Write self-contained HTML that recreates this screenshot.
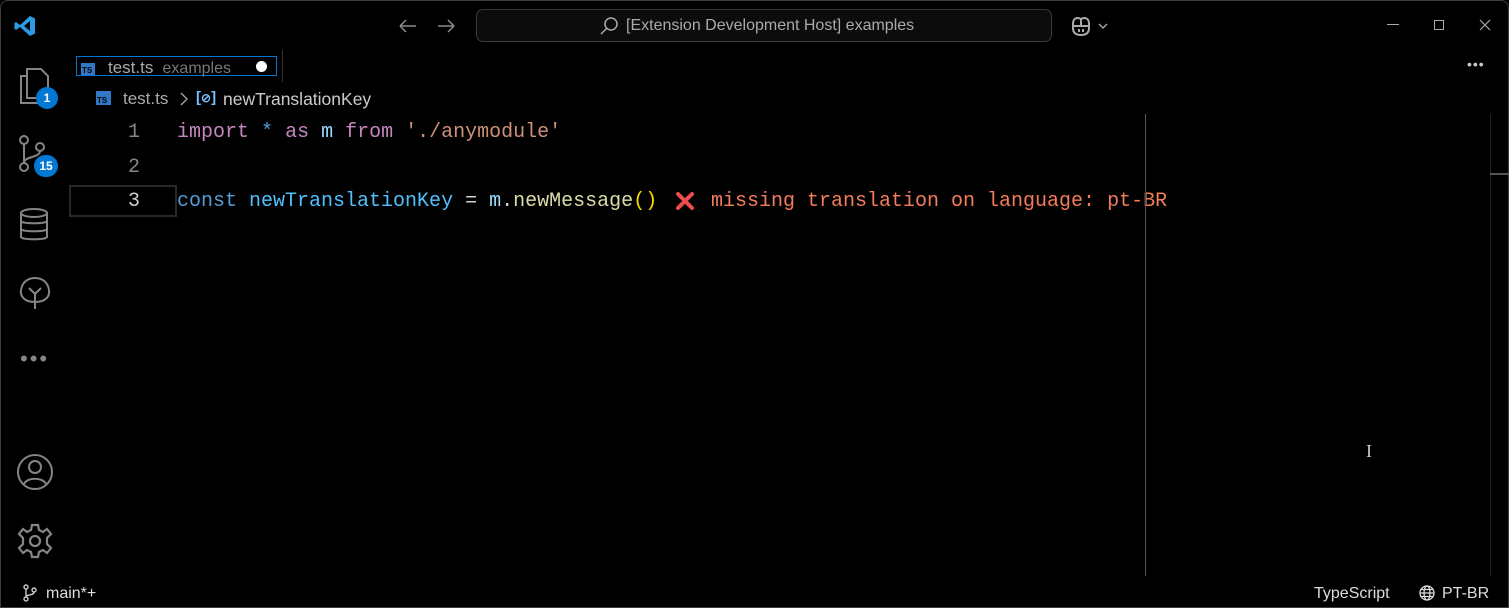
<!DOCTYPE html>
<html><head><meta charset="utf-8"><style>
*{margin:0;padding:0;box-sizing:border-box}
body{width:1509px;height:608px;background:#000;overflow:hidden;position:relative;font-family:"Liberation Sans",sans-serif;color:#ccc}
.frame{position:absolute;inset:0;border:1px solid #3c3c3c;border-radius:8px 8px 0 0}
.a{position:absolute}
.code{font-family:"Liberation Mono",monospace;font-size:20px;white-space:pre;position:absolute;line-height:24px}
.ln{font-family:"Liberation Mono",monospace;font-size:20px;position:absolute;color:#858585;width:40px;text-align:right}
</style></head><body>
<div class="frame"></div>
<svg class="a" style="left:13px;top:14px" width="24" height="24" viewBox="0 0 24 24"><path d="M17 2 L22 4.5 V19.5 L17 22 L7 13 L3 16 L1.5 15 V9 L3 8 L7 11 Z M17 7 L11 12 L17 17 Z" fill="#2a9ce6"/></svg>
<svg class="a" style="left:398px;top:16px" width="60" height="20" viewBox="0 0 60 20" stroke="#8a8a8a" stroke-width="1.5" fill="none"><path d="M2 10H18M2 10l6-6M2 10l6 6"/><path d="M40 10H56M56 10l-6-6M56 10l-6 6"/></svg>
<div class="a" style="left:476px;top:9px;width:576px;height:33px;border:1px solid #3a3a3a;border-radius:7px;background:#0c0c0c"></div>
<svg class="a" style="left:598px;top:15px" width="22" height="22" viewBox="0 0 22 22" stroke="#aaa" stroke-width="1.5" fill="none"><circle cx="13" cy="9" r="6"/><path d="M8.5 13.5L3 19"/></svg>
<div class="a" style="left:626px;top:17px;font-size:16px;color:#aaa">[Extension Development Host] examples</div>
<svg class="a" style="left:1069px;top:14px" width="44" height="24" viewBox="0 0 44 24" stroke="#aaa" stroke-width="2" fill="none"><path d="M4 10C4 4 8 3 12 5C16 3 20 4 20 10V14C20 19 17 21 12 21C7 21 4 19 4 14Z"/><path d="M4 12H20M10 15v3M14 15v3M12 5v7"/><path d="M30 10l4 4 4-4" stroke-width="1.3"/></svg>
<div class="a" style="left:1387px;top:24px;width:12px;height:1px;background:#aaa"></div>
<div class="a" style="left:1434px;top:20px;width:10px;height:10px;border:1px solid #aaa"></div>
<svg class="a" style="left:1479px;top:19px" width="12" height="12" stroke="#aaa" stroke-width="1.2"><path d="M1 1L11 11M11 1L1 11"/></svg>
<svg class="a" style="left:17px;top:66px" width="36" height="40" viewBox="0 0 36 40" stroke="#858585" stroke-width="2" fill="none"><path d="M10 10H4V37H22V32"/><path d="M10 3H24L31 10V32H10Z"/></svg>
<div class="a" style="left:36px;top:87px;width:22px;height:22px;border-radius:50%;background:#0078d4;color:#fff;font-size:12px;font-weight:bold;text-align:center;line-height:22px">1</div>
<svg class="a" style="left:18px;top:134px" width="30" height="40" viewBox="0 0 30 40" stroke="#858585" stroke-width="2" fill="none"><circle cx="6" cy="6" r="4"/><circle cx="22" cy="13" r="4"/><circle cx="6" cy="33" r="4"/><path d="M6 10V29M22 17C22 24 6 22 6 29"/></svg>
<div class="a" style="left:34px;top:155px;width:24px;height:22px;border-radius:11px;background:#0078d4;color:#fff;font-size:12px;font-weight:bold;text-align:center;line-height:22px">15</div>
<svg class="a" style="left:18px;top:207px" width="32" height="36" viewBox="0 0 32 36" stroke="#858585" stroke-width="2" fill="none"><ellipse cx="16" cy="6" rx="13" ry="4"/><path d="M3 6V30C3 33 29 33 29 30V6M3 14C3 17 29 17 29 14M3 22C3 25 29 25 29 22"/></svg>
<svg class="a" style="left:18px;top:274px" width="34" height="38" viewBox="0 0 34 38" stroke="#858585" stroke-width="2" fill="none"><path d="M17 35V18M11 14l6 6 6-6M17 28C6 28 2 22 3 16C4 9 9 4 17 4C25 4 30 9 31 16C32 22 28 28 17 28"/></svg>
<div class="a" style="left:20px;top:346px;font-size:22px;color:#858585;letter-spacing:2px">•••</div>
<svg class="a" style="left:16px;top:453px" width="38" height="38" viewBox="0 0 38 38" stroke="#858585" stroke-width="2" fill="none"><circle cx="19" cy="19" r="17"/><circle cx="19" cy="14" r="6"/><path d="M8 31C11 24 27 24 30 31"/></svg>
<svg class="a" style="left:16px;top:522px" width="38" height="38" viewBox="0 0 38 38" stroke="#858585" stroke-width="2.2" fill="none"><circle cx="19" cy="19" r="5"/><path d="M16 3H22L23 8L27 10L31 7L35 12L31 16V22L35 26L31 31L27 28L23 30L22 35H16L15 30L11 28L7 31L3 26L7 22V16L3 12L7 7L11 10L15 8Z"/></svg>
<div class="a" style="left:76px;top:56px;width:201px;height:20px;border:1px solid #0078d4"></div>
<div class="a" style="left:282px;top:50px;width:1px;height:32px;background:#333"></div>
<div class="a" style="left:81px;top:63px;width:14px;height:12px;background:#3178c6;color:#000;font-size:8px;font-weight:bold;line-height:16px;padding-left:1px">TS</div>
<div class="a" style="left:108px;top:58px;font-size:17px;color:#aaa">test.ts <span style="font-size:16px;color:#777">&nbsp;examples</span></div>
<div class="a" style="left:256px;top:61px;width:11px;height:11px;border-radius:50%;background:#fff"></div>
<div class="a" style="left:1467px;top:56px;font-size:14px;color:#ccc;letter-spacing:1px">•••</div>
<div class="a" style="left:96px;top:91px;width:15px;height:14px;background:#3178c6;color:#000;font-size:8px;font-weight:bold;line-height:19px;padding-left:1px">TS</div>
<div class="a" style="left:123px;top:89px;font-size:17px;color:#aaa">test.ts</div>
<svg class="a" style="left:178px;top:92px" width="12" height="14" stroke="#aaa" stroke-width="1.3" fill="none"><path d="M3 1L9 7L3 13"/></svg>
<div class="a" style="left:196px;top:89px;font-size:15px;color:#75beff;font-weight:bold">[<span style="font-size:12px">⊘</span>]</div>
<div class="a" style="left:223px;top:89px;font-size:17.5px;color:#ccc">newTranslationKey</div>
<div class="a" style="left:69px;top:185px;width:108px;height:32px;border:2px solid #282828"></div>
<div class="ln" style="left:100px;top:121px">1</div>
<div class="ln" style="left:100px;top:156px">2</div>
<div class="ln" style="left:100px;top:190px;color:#ccc">3</div>
<div class="code" style="left:177px;top:121px"><span style="color:#c586c0">import</span> <span style="color:#569cd6">*</span> <span style="color:#c586c0">as</span> <span style="color:#9cdcfe">m</span> <span style="color:#c586c0">from</span> <span style="color:#ce9178">'./anymodule'</span></div>
<div class="code" style="left:177px;top:190px"><span style="color:#569cd6">const</span> <span style="color:#4fc1ff">newTranslationKey</span> <span style="color:#d4d4d4">=</span> <span style="color:#9cdcfe">m</span><span style="color:#d4d4d4">.</span><span style="color:#dcdcaa">newMessage</span><span style="color:#ffd700">()</span></div>
<svg class="a" style="left:675px;top:191px" width="20" height="20" stroke="#f14c4c" stroke-width="4" stroke-linecap="round"><path d="M3 3L17 17M17 3L3 17"/></svg>
<div class="code" style="left:711px;top:190px;color:#f47c5a">missing translation on language: pt-BR</div>
<div class="a" style="left:1145px;top:114px;width:1px;height:462px;background:#555"></div>
<div class="a" style="left:1490px;top:114px;width:1px;height:462px;background:#222"></div>
<div class="a" style="left:1490px;top:173px;width:19px;height:2px;background:#555"></div>
<div class="a" style="left:1366px;top:441px;font-size:18px;color:#ccc;font-family:'Liberation Serif',serif">I</div>
<svg class="a" style="left:22px;top:584px" width="16" height="18" viewBox="0 0 16 18" stroke="#ccc" stroke-width="1.4" fill="none"><circle cx="4" cy="3" r="2"/><circle cx="12" cy="6" r="2"/><circle cx="4" cy="15" r="2"/><path d="M4 5V13M12 8C12 12 4 10 4 13"/></svg>
<div class="a" style="left:46px;top:585px;font-size:16px;color:#ddd">main*+</div>
<div class="a" style="left:1314px;top:585px;font-size:16px;color:#ddd">TypeScript</div>
<svg class="a" style="left:1419px;top:585px" width="16" height="16" viewBox="0 0 16 16" stroke="#ddd" stroke-width="1.3" fill="none"><circle cx="8" cy="8" r="7"/><ellipse cx="8" cy="8" rx="3" ry="7"/><path d="M1 8H15M2 4.5H14M2 11.5H14"/></svg>
<div class="a" style="left:1442px;top:585px;font-size:16px;color:#ddd">PT-BR</div>
</body></html>
